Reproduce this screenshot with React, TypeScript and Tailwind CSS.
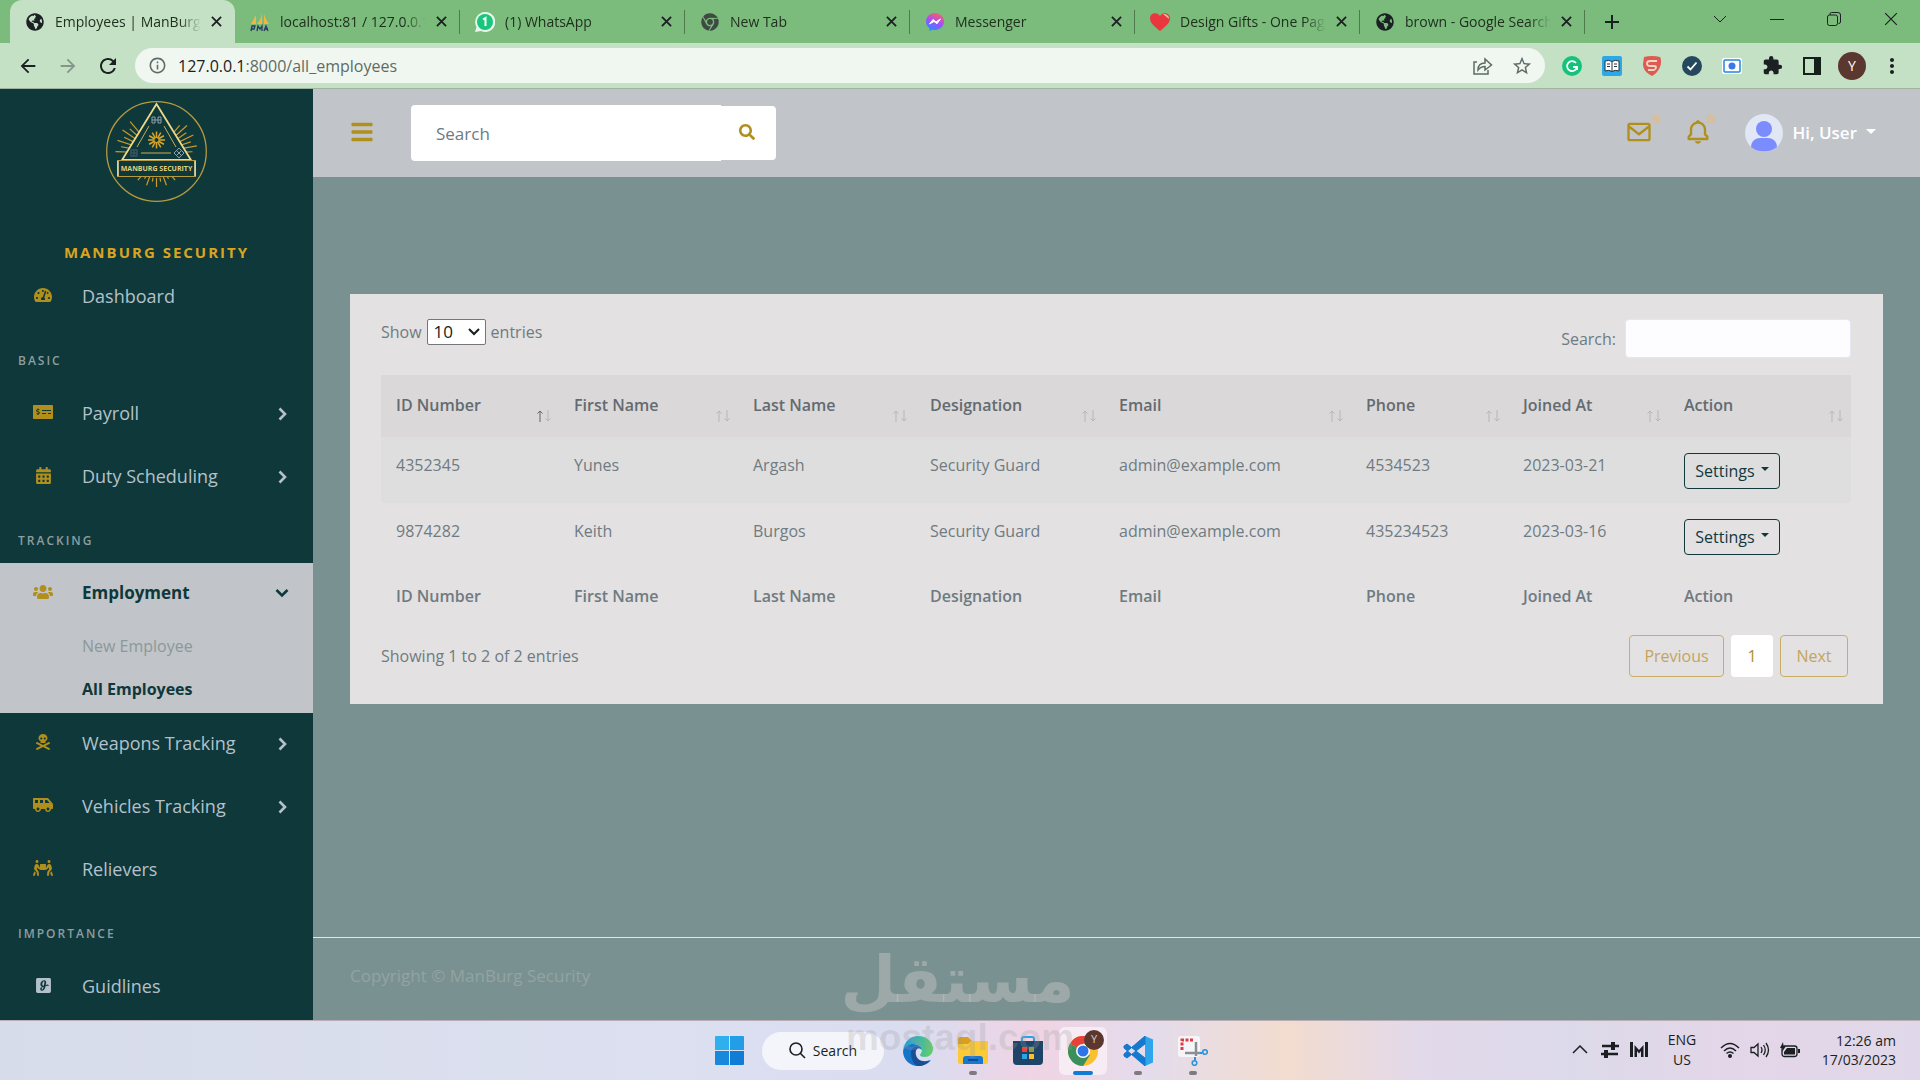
import { ReactNode, useState } from "react";
import {
  FaBars,
  FaCalendarAlt,
  FaChrome,
  FaGlide,
  FaGlobeAmericas,
  FaMoneyCheckAlt,
  FaPeopleCarry,
  FaSearch,
  FaShuttleVan,
  FaSkullCrossbones,
  FaTachometerAlt,
  FaUsers,
} from "react-icons/fa";
import { BiBell, BiEnvelope } from "react-icons/bi";
import {
  MdArrowBack,
  MdArrowForward,
  MdExtension,
  MdMoreVert,
  MdOutlineInfo,
  MdRefresh,
  MdStarBorder,
} from "react-icons/md";

interface ITab {
  title: string;
  icon: ReactNode;
  active?: boolean;
}

interface IEmployee {
  id: string;
  firstName: string;
  lastName: string;
  designation: string;
  email: string;
  phone: string;
  joinedAt: string;
}

const tabs: ITab[] = [
  {
    title: "Employees | ManBurg",
    icon: <FaGlobeAmericas size={18} className="text-[#1b2023]" />,
    active: true,
  },
  { title: "localhost:81 / 127.0.0.1", icon: <PmaIcon /> },
  { title: "(1) WhatsApp", icon: <WhatsAppIcon /> },
  { title: "New Tab", icon: <FaChrome size={18} className="text-[#3c4a41]" /> },
  { title: "Messenger", icon: <MessengerIcon /> },
  { title: "Design Gifts - One Page", icon: <HeartIcon /> },
  {
    title: "brown - Google Search",
    icon: <FaGlobeAmericas size={18} className="text-[#1b2023]" />,
  },
];

const columns = [
  { title: "ID Number", width: "w-[178px]" },
  { title: "First Name", width: "w-[179px]" },
  { title: "Last Name", width: "w-[177px]" },
  { title: "Designation", width: "w-[189px]" },
  { title: "Email", width: "w-[247px]" },
  { title: "Phone", width: "w-[157px]" },
  { title: "Joined At", width: "w-[161px]" },
  { title: "Action", width: "w-[182px]" },
];

const employees: IEmployee[] = [
  {
    id: "4352345",
    firstName: "Yunes",
    lastName: "Argash",
    designation: "Security Guard",
    email: "admin@example.com",
    phone: "4534523",
    joinedAt: "2023-03-21",
  },
  {
    id: "9874282",
    firstName: "Keith",
    lastName: "Burgos",
    designation: "Security Guard",
    email: "admin@example.com",
    phone: "435234523",
    joinedAt: "2023-03-16",
  },
];

/* ---------- favicons ---------- */

function PmaIcon() {
  return (
    <svg width="20" height="20" viewBox="0 0 20 20">
      <path d="M6 3v9H1zM12 1v11H7c3-3 4-6 5-11zM14 2c1 4 3 7 5 10h-5z" fill="#f6b63c" />
      <path d="M1 19l1-5h3l-1 3H2M7 19l1-5 2 3 2-3v5M14 19l2-5 2 5M15 17h3" stroke="#2b3a63" strokeWidth="1.3" fill="none" />
    </svg>
  );
}

function WhatsAppIcon() {
  return (
    <svg width="20" height="20" viewBox="0 0 20 20">
      <path d="M10 0a10 10 0 1 1-4 19l-6 1 1.500-5A10 10 0 0 1 10 0z" fill="#e8f7ec" />
      <circle cx="10" cy="10" r="8" fill="#19c67b" />
      <path d="M8 7.500l2.500-1.500v8" stroke="#fff" strokeWidth="2" fill="none" />
    </svg>
  );
}

function MessengerIcon() {
  return (
    <svg width="18" height="18" viewBox="0 0 18 18">
      <defs>
        <linearGradient id="msg" x1="0.300" y1="1" x2="0.700" y2="0">
          <stop offset="0" stopColor="#1e90ff" />
          <stop offset="0.500" stopColor="#a44dff" />
          <stop offset="1" stopColor="#ff5d62" />
        </linearGradient>
      </defs>
      <path d="M9 0c5 0 9 3.700 9 8.500S14 17 9 17l-2.500-.3L3.500 18v-2.800A8.600 8.600 0 0 1 0 8.500C0 3.700 4 0 9 0z" fill="url(#msg)" />
      <path d="M3.500 11l3.500-4.500 3 2.300L14.500 6 11 10.700 8 8.500z" fill="#fff" stroke="#fff" />
    </svg>
  );
}

function HeartIcon() {
  return (
    <svg width="20" height="18" viewBox="0 0 20 18">
      <path d="M10 18C4 13 0 9.500 0 5.500 0 0 7 -1.500 10 3c3-4.500 10-3 10 2.500C20 9.500 16 13 10 18z" fill="#e9363f" />
      <path d="M13 1l6 5c0-3-2-5-6-5z" fill="#e7c39c" />
    </svg>
  );
}

/* ---------- browser chrome ---------- */

const CrossIcon = ({ size = 11, weight = 2 }: { size?: number; weight?: number }) => (
  <svg width={size} height={size} viewBox="0 0 12 12" stroke="#1b2023" strokeWidth={weight} fill="none">
    <path d="M1 1l10 10M11 1L1 11" />
  </svg>
);

const BrowserTabs = () => (
  <div className="flex h-[43px] bg-[#7bbb7c] pl-[10px] text-[#20301f]">
    {tabs.map((tab, i) => (
      <div
        key={tab.title}
        className={
          tab.active
            ? "flex w-[225px] items-center gap-[10px] rounded-t-xl bg-[#c5e1c5] pr-[13px] pl-[15px]"
            : "relative flex w-[225px] items-center gap-[10px] pr-[13px] pl-[15px]"
        }
      >
        <span className="flex w-5 justify-center">{tab.icon}</span>
        <span className="flex-1 overflow-hidden mask-r-from-85% text-[14px] whitespace-nowrap">
          {tab.title}
        </span>
        <button aria-label={"Close " + tab.title}>
          <CrossIcon />
        </button>
        {i > 0 && <span className="absolute top-[10px] right-0 h-6 w-px bg-[#4e7a4d]" />}
      </div>
    ))}
    <button aria-label="Open tab" className="ml-5 self-center">
      <svg width="14" height="14" viewBox="0 0 14 14" stroke="#1b2023" strokeWidth="2">
        <path d="M7 0v14M0 7h14" />
      </svg>
    </button>
    <div className="ml-auto flex items-center gap-[43px] pr-[22px] pb-[6px]">
      <svg width="14" height="8" viewBox="0 0 14 8" stroke="#1b2023" fill="none">
        <path d="M1 1l6 6 6-6" />
      </svg>
      <svg width="14" height="12" viewBox="0 0 14 12" stroke="#1b2023">
        <path d="M0 6.500h14" />
      </svg>
      <svg width="14" height="14" viewBox="0 0 14 14" stroke="#1b2023" fill="none">
        <rect x="0.500" y="3" width="10" height="10.500" rx="2" />
        <path d="M3 3V2q0-1.500 1.500-1.500H11q2.500 0 2.500 2.500v7q0 1.500-2 1.500" />
      </svg>
      <CrossIcon size={14} weight={1} />
    </div>
  </div>
);

const Extensions = () => (
  <div className="flex items-center">
    <span className="flex w-10 justify-center">
      <svg width="20" height="20" viewBox="0 0 20 20" fill="none">
        <circle cx="10" cy="10" r="10" fill="#15c279" />
        <path d="M14 7a5 5 0 1 0 1 4h-4M15 10v4" stroke="#fff" strokeWidth="1.800" />
      </svg>
    </span>
    <span className="flex w-10 justify-center">
      <svg width="20" height="20" viewBox="0 0 20 20">
        <rect width="20" height="20" rx="2" fill="#2ba8e8" />
        <path d="M3 5q4-1.500 7 .5 3-2 7-.5v10q-4-1.500-7 .5-3-2-7-.5z" fill="#fff" stroke="#24323b" />
        <path d="M10 6v9M5 8h3M5 10.500h3M12 8h3M12 10.500h3" stroke="#24323b" />
      </svg>
    </span>
    <span className="flex w-10 justify-center">
      <svg width="20" height="20" viewBox="0 0 20 20" fill="none">
        <path d="M2 1q8-2 16 0c2 3 2 13-8 19C4 17 1 13 1 8z" fill="#dd5b51" />
        <path d="M15 5H8Q5 5 5 7.500T8 10h4q2 0 2 1.500T12 14H6" stroke="#f1d5c6" strokeWidth="1.800" />
      </svg>
    </span>
    <span className="flex w-10 justify-center">
      <svg width="20" height="20" viewBox="0 0 20 20" fill="none">
        <circle cx="10" cy="10" r="10" fill="#26485f" />
        <path d="M5.500 10.500l3 3 6-7" stroke="#fff" strokeWidth="1.800" />
      </svg>
    </span>
    <span className="flex w-10 justify-center">
      <svg width="20" height="16" viewBox="0 0 20 16">
        <rect width="20" height="16" rx="2" fill="#fff" />
        <rect x="2" y="2" width="16" height="12" rx="1" fill="#fff" stroke="#2387e0" strokeWidth="1.500" />
        <circle cx="10" cy="8" r="3.500" fill="#3b77e8" />
      </svg>
    </span>
    <span className="flex w-10 justify-center">
      <MdExtension size={21} className="text-[#1b2023]" />
    </span>
    <span className="flex w-10 justify-center">
      <svg width="18" height="18" viewBox="0 0 18 18">
        <rect x="1" y="1" width="16" height="16" fill="none" stroke="#16201a" strokeWidth="2" />
        <rect x="11" y="1" width="6" height="16" fill="#16201a" />
      </svg>
    </span>
    <span className="flex w-10 justify-center">
      <span className="flex size-7 items-center justify-center rounded-full bg-[#5a3830] text-[14px] text-white">
        Y
      </span>
    </span>
    <button aria-label="Menu" className="flex w-10 justify-center">
      <MdMoreVert size={24} className="text-[#1b2023]" />
    </button>
  </div>
);

const BrowserToolbar = () => (
  <div className="flex h-[46px] items-center border-b border-[#9fb39f] bg-[#c5e1c5] pr-2 pl-4">
    <button aria-label="Back" className="flex w-6 justify-center">
      <MdArrowBack size={22} className="text-[#1b2023]" />
    </button>
    <button aria-label="Forward" className="ml-4 flex w-6 justify-center">
      <MdArrowForward size={22} className="text-[#82968a]" />
    </button>
    <button aria-label="Reload" className="ml-4 flex w-6 justify-center">
      <MdRefresh size={24} className="text-[#1b2023]" />
    </button>
    <div className="mr-[7px] ml-[15px] flex h-[35px] flex-1 items-center rounded-full bg-[#f0f7f0] pr-3 pl-[13px] text-[#5f6b66]">
      <MdOutlineInfo size={19} />
      <p className="ml-[11px] flex-1 text-[16px]">
        <span className="text-[#1b2023]">127.0.0.1</span>:8000/all_employees
      </p>
      <svg width="20" height="18" viewBox="0 0 20 18" fill="none" stroke="#5f6b66" strokeWidth="1.500" className="mr-[18px]">
        <path d="M4 5H1v12h14v-4M5 13c0-5 3-7 7-7V2l6.500 6L12 13V9.500c-3 0-5 1-7 3.500z" />
      </svg>
      <MdStarBorder size={22} />
    </div>
    <Extensions />
  </div>
);

/* ---------- sidebar ---------- */

const topRays = [182, 190, 198, 206, 214, 222, 230, 310, 318, 326, 334, 342, 350, 358];
const bottomRays = [40, 50, 60, 70, 80, 90, 100, 110, 120, 130, 140];

const ray = (deg: number, from: number, to: number, cx: number, cy: number) => {
  const a = (deg * Math.PI) / 180;
  return `M${cx + from * Math.cos(a)} ${cy + from * Math.sin(a)}L${cx + to * Math.cos(a)} ${cy + to * Math.sin(a)}`;
};

const BrandLogo = () => (
  <svg width="101" height="101" viewBox="0 0 101 101" fill="none">
    <circle cx="50.500" cy="50.500" r="49.800" stroke="#b79a3e" strokeWidth="1.300" />
    <g stroke="#c99a2a" strokeWidth="1.200">
      {topRays.map((deg, i) => (
        <path key={deg} d={ray(deg, 22, i % 2 ? 36 : 41, 50.5, 52)} />
      ))}
      {bottomRays.map((deg, i) => (
        <path key={deg} d={ray(deg, 20, i % 2 ? 29 : 24, 50.5, 57)} />
      ))}
    </g>
    <path d="M50.500 3L16 59h69z" fill="#0f383a" stroke="#ecd98c" strokeWidth="1.800" />
    <path d="M43 25L31 46M58 25l12 21M35 52h30" stroke="#c9ad5a" />
    <g stroke="#dba728" strokeWidth="1.500">
      {Array.from({ length: 12 }, (_, i) => (
        <path key={i} d={ray(i * 30, 2, 8.5, 50.5, 39)} />
      ))}
    </g>
    <path d="M46 16h3v6h-3zM52 16h3v6h-3zM46 19h9" stroke="#8ea0ae" />
    <path d="M25 49h6v6h-6zM25 52h6M28 49v6" stroke="#39545f" strokeWidth="1.400" />
    <path d="M73 47l5 5-5 5-5-5zM70.500 49.500l5 5M75.500 49.500l-5 5" stroke="#8ea0ae" />
    <rect x="11.500" y="59.500" width="78" height="16" fill="#0f383a" stroke="#b79a3e" />
    <path d="M12 60v15M89 60v15" stroke="#e6dca6" strokeWidth="1.600" />
    <text x="50.500" y="70" textAnchor="middle" fontSize="7" fontWeight="700" fill="#e3cf7b" fontFamily="Open Sans, sans-serif">
      MANBURG SECURITY
    </text>
  </svg>
);

const Chevron = ({ open }: { open?: boolean }) => (
  <svg width="14" height="14" viewBox="0 0 14 14" fill="none" stroke="currentColor" strokeWidth="2.600">
    <path d={open ? "M1.500 4l5.500 5.500L12.500 4" : "M4.500 1.500L10 7l-5.500 5.500"} />
  </svg>
);

interface ISideLink {
  icon: ReactNode;
  label: string;
  arrow?: boolean;
}

const SideLink = ({ icon, label, arrow }: ISideLink) => (
  <a href="#" className="flex h-[63px] items-center pr-6 pb-0.5 pl-8 text-[18px] text-[#b4c1cb]">
    <span className="flex w-[22px] justify-center pb-[3px] text-[#b08f1d]">{icon}</span>
    <span className="ml-7 flex-1">{label}</span>
    {arrow && <Chevron />}
  </a>
);

const SideHeading = ({ children }: { children: ReactNode }) => (
  <h3 className="h-[54px] pt-[22px] pl-[18px] text-[12px] leading-5 font-semibold tracking-[2px] text-[#8d9da0] uppercase">
    {children}
  </h3>
);

const Sidebar = () => (
  <nav className="w-[313px] shrink-0 bg-[#0f383a]">
    <div className="flex justify-center pt-3">
      <BrandLogo />
    </div>
    <h2 className="pt-10 pb-1 text-center text-[15px] leading-5 font-bold tracking-[2px] text-[#d9a520]">
      MANBURG SECURITY
    </h2>
    <SideLink icon={<FaTachometerAlt size={18} />} label="Dashboard" />
    <SideHeading>Basic</SideHeading>
    <SideLink icon={<FaMoneyCheckAlt size={20} />} label="Payroll" arrow />
    <SideLink icon={<FaCalendarAlt size={17} />} label="Duty Scheduling" arrow />
    <SideHeading>Tracking</SideHeading>
    <div className="h-[150px] bg-[#c1c4c9] text-[#0f383a]">
      <a href="#" className="flex h-[62px] items-center pr-6 pb-0.5 pl-8 text-[17px] font-bold">
        <span className="flex w-[22px] justify-center pb-[3px] text-[#b08f1d]">
          <FaUsers size={20} />
        </span>
        <span className="ml-7 flex-1">Employment</span>
        <Chevron open />
      </a>
      <a href="#" className="flex h-[43px] items-center pb-0.5 pl-[82px] text-[16px] text-[#8a9999]">
        New Employee
      </a>
      <a href="#" className="flex h-[43px] items-center pb-0.5 pl-[82px] text-[16px] font-bold">
        All Employees
      </a>
    </div>
    <SideLink icon={<FaSkullCrossbones size={16} />} label="Weapons Tracking" arrow />
    <SideLink icon={<FaShuttleVan size={20} />} label="Vehicles Tracking" arrow />
    <SideLink icon={<FaPeopleCarry size={20} />} label="Relievers" />
    <SideHeading>Importance</SideHeading>
    <SideLink icon={<FaGlide size={17} className="text-[#b4c1cb]" />} label="Guidlines" />
  </nav>
);

/* ---------- page ---------- */

const Header = () => (
  <header className="flex h-[88px] items-center bg-[#c1c4c9] pr-11 pl-[37px] text-[#b08f1d]">
    <button aria-label="Toggle menu" className="flex w-6 justify-center pb-0.5">
      <FaBars size={24} />
    </button>
    <form className="ml-[37px] flex items-center" onSubmit={(e) => e.preventDefault()}>
      <input
        type="search"
        aria-label="Search"
        placeholder="Search"
        className="h-14 w-[310px] rounded-l-sm bg-white px-[25px] text-[17px] text-[#6d7b80] outline-none placeholder:text-[#6d7b80]"
      />
      <button aria-label="Submit search" className="flex h-[54px] w-[55px] items-center justify-center rounded-r-sm bg-white pr-1 pb-0.5">
        <FaSearch size={16} />
      </button>
    </form>
    <div className="ml-auto flex items-center">
      <button aria-label="Messages" className="relative pb-0.5">
        <BiEnvelope size={28} />
        <span className="absolute -top-1 -right-2 size-[10px] rounded-full bg-[#d2bfa5]" />
      </button>
      <button aria-label="Notifications" className="relative ml-[31px] pb-0.5">
        <BiBell size={28} />
        <span className="absolute -top-1 -right-1 size-[10px] rounded-full bg-[#d2bfa5]" />
      </button>
      <button className="ml-[33px] flex items-center text-[17px] font-semibold text-white">
        <svg width="38" height="38" viewBox="0 0 38 38">
          <circle cx="19" cy="19" r="19" fill="#e1e7f5" />
          <circle cx="19" cy="15" r="8" fill="#7b8cff" />
          <path d="M6 33c0-6 5-9 9-9h8c4 0 9 3 9 9-7 6-19 6-26 0z" fill="#7b8cff" />
        </svg>
        <span className="ml-[9px]">Hi, User</span>
        <span className="mb-1 ml-[9px] border-x-5 border-t-5 border-x-transparent border-t-white" />
      </button>
    </div>
  </header>
);

const SortArrows = ({ asc }: { asc?: boolean }) => (
  <svg width="14" height="12" viewBox="0 0 14 12" fill="none" className="absolute right-2 bottom-[15px]">
    <path d="M3 12V1M0.500 3.500L3 1l2.500 2.500" stroke={asc ? "#5c676c" : "#b5b5bb"} />
    <path d="M11 0v11M8.500 8.500L11 11l2.500-2.500" stroke="#b5b5bb" />
  </svg>
);

const EmployeeTable = () => (
  <table className="mt-[17px] w-full table-fixed text-left text-[16px] leading-6 text-[#6f7b81]">
    <thead className="bg-[#dad8d9] text-[#636b70]">
      <tr>
        {columns.map((col, i) => (
          <th key={col.title} className={`${col.width} relative h-[62px] px-[15px] pt-[18px] align-top font-semibold`}>
            {col.title}
            <SortArrows asc={i === 0} />
          </th>
        ))}
      </tr>
    </thead>
    <tbody>
      {employees.map((item) => (
        <tr key={item.id} className="h-[66px] align-top odd:bg-[#dfdede] [&>td]:px-[15px] [&>td]:pt-4">
          <td>{item.id}</td>
          <td>{item.firstName}</td>
          <td>{item.lastName}</td>
          <td>{item.designation}</td>
          <td>{item.email}</td>
          <td>{item.phone}</td>
          <td>{item.joinedAt}</td>
          <td>
            <button className="flex h-9 w-24 items-center justify-center gap-[6px] rounded-sm border border-[#12383b] text-[16px] text-[#12383b]">
              Settings
              <span className="mb-1 border-x-4 border-t-4 border-x-transparent border-t-[#12383b]" />
            </button>
          </td>
        </tr>
      ))}
    </tbody>
    <tfoot>
      <tr>
        {columns.map((col) => (
          <th key={col.title} className="px-[15px] pt-[15px] pb-[14px] font-semibold">
            {col.title}
          </th>
        ))}
      </tr>
    </tfoot>
  </table>
);

const EmployeesCard = () => {
  const [search, setSearch] = useState("");

  return (
    <section className="bg-[#e3e1e2] pt-[25px] pr-8 pb-[27px] pl-[31px] text-[16px] text-[#6f7b81]">
      <div className="flex items-start justify-between">
        <label className="flex items-center gap-[5px]">
          Show
          <span className="relative flex items-center">
            <select
              defaultValue="10"
              className="h-[26px] w-[59px] appearance-none rounded-xs border border-[#76767a] bg-white pl-[6px] text-[17px] leading-6 text-[#171d20]"
            >
              <option>10</option>
              <option>25</option>
              <option>50</option>
              <option>100</option>
            </select>
            <svg width="12" height="8" viewBox="0 0 12 8" fill="none" stroke="#171d20" strokeWidth="2" className="pointer-events-none absolute right-[6px]">
              <path d="M1 1l5 5 5-5" />
            </svg>
          </span>
          entries
        </label>
        <label className="flex items-center gap-[9px]">
          Search:
          <input
            type="search"
            value={search}
            onChange={(e) => setSearch(e.target.value)}
            className="h-[39px] w-[226px] rounded-sm border border-[#e4e6f3] bg-[#fdfdff] px-2 outline-none"
          />
        </label>
      </div>
      <EmployeeTable />
      <div className="mt-[13px] flex items-center justify-between pr-[3px]">
        <p>Showing 1 to 2 of 2 entries</p>
        <div className="flex gap-[7px] text-[#c2a55e]">
          <button className="h-[42px] w-[95px] rounded-sm border border-[#c9ad6a]">Previous</button>
          <button className="h-[42px] w-[42px] rounded-sm bg-white text-[#b08f1d]">1</button>
          <button className="h-[42px] w-[68px] rounded-sm border border-[#c9ad6a]">Next</button>
        </div>
      </div>
    </section>
  );
};

/* ---------- taskbar ---------- */

const EdgeIcon = () => (
  <svg width="30" height="30" viewBox="0 0 30 30">
    <defs>
      <linearGradient id="edge" x1="0" y1="0.300" x2="1" y2="0.400">
        <stop offset="0" stopColor="#1b9de2" />
        <stop offset="1" stopColor="#62cf6a" />
      </linearGradient>
    </defs>
    <path d="M0 15C1 5 8 0 15 0c9 0 15 6 15 13 0 5-4 8-8 8-3 0-5-1-5-2 0-1 2-2 2-5 0-3-4-6-9-6-4 0-8 3-10 7z" fill="url(#edge)" />
    <path d="M0 15c2-5 6-7 10-7 5 0 9 3 9 6-1-1-3-2-5-1-3 2-3 11 6 13 3 .5 5-.5 8-2-3 4-8 6-13 6C6 30 0 23 0 15z" fill="#1674c8" />
    <path d="M8 17c0-4 4-8 9-6-4 1-5 5-4 8 1 5 7 8 14 5-3 4-7 6-12 6-4-1-7-7-7-13z" fill="#174f96" />
  </svg>
);

const FolderIcon = () => (
  <svg width="30" height="28" viewBox="0 0 30 28">
    <path d="M0 2q0-2 2-2h8l4 4h14q2 0 2 2v8H0z" fill="#d99f20" />
    <path d="M0 8q0-1 1-1h9l3-3h15q2 0 2 2v18q0 3-2 3H2q-2 0-2-3z" fill="#fcc937" />
    <path d="M5 27v-5q0-3 3-3h14q3 0 3 3v5z" fill="#1877cf" />
    <path d="M10 23h10" stroke="#0d4c92" strokeWidth="2" />
  </svg>
);

const StoreIcon = () => (
  <svg width="30" height="30" viewBox="0 0 30 30">
    <path d="M9 6V3q0-2 2-2h8q2 0 2 2v3" fill="none" stroke="#2ba3e6" strokeWidth="2" />
    <path d="M0 5h30v20q0 4-4 4H4q-4 0-4-4z" fill="#1e4468" />
    <path d="M9 11h5v5H9z" fill="#ef4136" />
    <path d="M16 11h5v5h-5z" fill="#8a9b32" />
    <path d="M9 18h5v5H9z" fill="#2ba3e6" />
    <path d="M16 18h5v5h-5z" fill="#fbc02d" />
  </svg>
);

const ChromeIcon = () => (
  <svg width="30" height="30" viewBox="0 0 30 30">
    <circle cx="15" cy="15" r="15" fill="#fbc02d" />
    <path d="M15 15L2 7.500A15 15 0 0 1 28 7.500H15z" fill="#e8413a" />
    <path d="M15 15L2 7.500A15 15 0 0 0 15 30l7-11z" fill="#3a8f5b" />
    <circle cx="15" cy="15" r="7" fill="#fff" />
    <circle cx="15" cy="15" r="5.500" fill="#2d75e6" />
  </svg>
);

const CodeIcon = () => (
  <svg width="30" height="30" viewBox="0 0 30 30">
    <path d="M22 0l8 3.500v23L22 30z" fill="#2fa6ec" />
    <path d="M1 10l3-2 18 14v8L1 12zM1 20l3 2L22 8V0L1 18z" fill="#1479cf" stroke="#1479cf" strokeLinejoin="round" />
  </svg>
);

const SnipIcon = () => (
  <svg width="30" height="30" viewBox="0 0 30 30" fill="none">
    <rect width="22" height="21" rx="3" fill="#f6f6f8" />
    <path d="M15 4H4v11" stroke="#e23a44" strokeWidth="3" strokeDasharray="3 1.500" />
    <path d="M18 6v14M7 17h15" stroke="#8b8f95" strokeWidth="2.500" />
    <path d="M22 17h2M17 21v3" stroke="#2b93dc" strokeWidth="2" />
    <circle cx="27" cy="16" r="2.300" stroke="#2b93dc" strokeWidth="1.600" />
    <circle cx="16.500" cy="27" r="2.300" stroke="#2b93dc" strokeWidth="1.600" />
  </svg>
);

const apps: { name: string; icon: ReactNode; running?: boolean; focused?: boolean }[] = [
  { name: "Edge", icon: <EdgeIcon /> },
  { name: "Explorer", icon: <FolderIcon />, running: true },
  { name: "Store", icon: <StoreIcon /> },
  { name: "Chrome", icon: <ChromeIcon />, focused: true },
  { name: "Code", icon: <CodeIcon />, running: true },
  { name: "Snipping", icon: <SnipIcon />, running: true },
];

const Taskbar = () => (
  <footer className="relative flex h-[60px] items-center border-t border-[#b9aeb6] bg-[linear-gradient(90deg,#d7dcea_0%,#dce0f0_35%,#dadcf0_48%,#f0d4e4_54%,#e4dcec_60%,#f3dccf_67%,#e2d9ea_74%,#dcdaea_82%,#e3d6e8_90%,#e0d8ea_100%)] text-[#1b1f22]">
    <div className="flex flex-1 items-center justify-center pl-[360px]">
      <button aria-label="Start">
        <svg width="29" height="29" viewBox="0 0 29 29">
          <path d="M0 1q0-1 1-1h13v14H0z" fill="#2eb0ee" />
          <path d="M15 0h13q1 0 1 1v13H15z" fill="#229de6" />
          <path d="M0 15h14v14H1q-1 0-1-1z" fill="#1788dc" />
          <path d="M15 15h14v13q0 1-1 1H15z" fill="#0f7cd6" />
        </svg>
      </button>
      <button className="ml-[18px] flex h-[38px] w-[122px] items-center justify-center gap-[7px] rounded-full bg-[#f4f5fb] text-[14px]">
        <svg width="17" height="17" viewBox="0 0 17 17" fill="none" stroke="#1b1f22" strokeWidth="1.600">
          <circle cx="7" cy="7" r="6" />
          <path d="M11 11l5 5" />
        </svg>
        Search
      </button>
      <div className="ml-[10px] flex gap-[7px]">
        {apps.map((app) => (
          <button
            key={app.name}
            aria-label={app.name}
            className={
              app.focused
                ? "relative flex size-12 items-center justify-center rounded-md bg-[#f7ebf4]"
                : "relative flex size-12 items-center justify-center"
            }
          >
            {app.icon}
            {app.running && <span className="absolute bottom-0 h-1 w-2 rounded-full bg-[#7d7b80]" />}
            {app.focused && (
              <>
                <span className="absolute bottom-0 h-1 w-5 rounded-full bg-[#0f7cd6]" />
                <span className="absolute top-[3px] right-[3px] flex size-5 items-center justify-center rounded-full bg-[#5a3830] text-[11px] text-[#d8c8c4]">
                  Y
                </span>
              </>
            )}
          </button>
        ))}
      </div>
    </div>
    <div className="flex w-[348px] items-center pr-6 pb-0.5 text-[14px] leading-5">
      <svg width="16" height="9" viewBox="0 0 16 9" fill="none" stroke="#1b1f22" strokeWidth="1.500">
        <path d="M1 8l7-7 7 7" />
      </svg>
      <svg width="18" height="16" viewBox="0 0 18 16" fill="none" stroke="#1b1f22" strokeWidth="2.500" className="ml-[13px]">
        <path d="M1 4h17M0 12h17" />
        <path d="M12 0v8M5 8v8" strokeWidth="4" />
      </svg>
      <svg width="18" height="15" viewBox="0 0 18 15" fill="#1b1f22" className="ml-[11px]">
        <path d="M0 0h3v15H0zM15 0h3v15h-3zM4.500 3L9 8l4.500-5v12H11V9l-2 2.500L7 9v6H4.500z" />
      </svg>
      <p className="ml-[18px] w-8 text-center">
        ENG
        <br />
        US
      </p>
      <svg width="20" height="16" viewBox="0 0 20 16" fill="none" stroke="#1b1f22" strokeWidth="1.400" className="ml-[22px]">
        <path d="M1 6q9-9 18 0M4 9q6-6 12 0M6.500 11.500q3.500-3 7 0" />
        <circle cx="10" cy="14" r="1.300" fill="#1b1f22" />
      </svg>
      <svg width="20" height="16" viewBox="0 0 20 16" fill="none" stroke="#1b1f22" strokeWidth="1.300" className="ml-[10px]">
        <path d="M1 5.500h3L8 2v12l-4-3.500H1zM11 5q2 3 0 6M13.500 3q3.500 5 0 10M16 1q5 7 0 14" />
      </svg>
      <svg width="20" height="16" viewBox="0 0 20 16" fill="#1b1f22" className="ml-[10px]">
        <rect x="2" y="4" width="15" height="10.500" rx="2.500" fill="none" stroke="#1b1f22" strokeWidth="1.300" />
        <path d="M7 6h8v6.500H4V10zM18 7h2v4h-2zM3 0L0 6h2.500L2 10l4-6H3.500z" />
      </svg>
      <p className="ml-auto text-right leading-[19px]">
        12:26 am
        <br />
        17/03/2023
      </p>
    </div>
    <div className="pointer-events-none absolute bottom-[22px] left-1/2 w-[229px] -translate-x-1/2 text-center whitespace-nowrap">
      <p lang="ar" dir="rtl" className="font-['DejaVu_Sans'] text-[64px] leading-[76px] font-bold text-[#d2cdcb]/40">
        مستقل
      </p>
      <p className="font-['Liberation_Sans'] text-[37px] leading-10 font-bold text-[#9c9c9c]/25">mostaql.com</p>
    </div>
  </footer>
);

export default function App() {
  return (
    <div className="flex min-h-screen flex-col bg-[#7a9191] font-['Open_Sans',sans-serif]">
      <BrowserTabs />
      <BrowserToolbar />
      <div className="flex flex-1">
        <Sidebar />
        <div className="flex min-w-0 flex-1 flex-col">
          <Header />
          <main className="px-[37px] pt-[117px]">
            <EmployeesCard />
          </main>
          <div className="mt-auto h-[83px] border-t border-[#dfe7ec] px-[37px] pt-[26px] text-[17px] leading-6 text-[#92a4a3]">
            Copyright © ManBurg Security
          </div>
        </div>
      </div>
      <Taskbar />
    </div>
  );
}
